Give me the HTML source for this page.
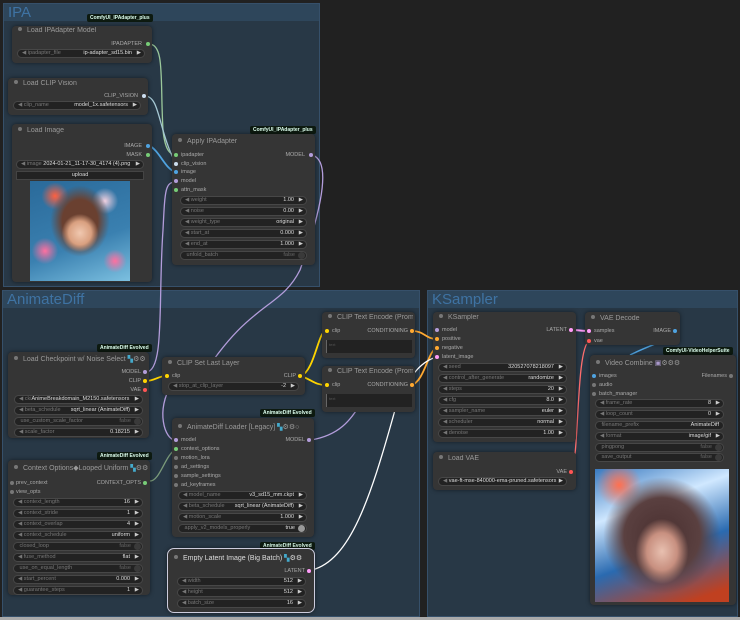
<!DOCTYPE html><html><head><meta charset="utf-8"><style>
*{margin:0;padding:0;box-sizing:border-box}
body{width:740px;height:620px;background:#212121;position:relative;overflow:hidden;font-family:"Liberation Sans",sans-serif;}
.g{position:absolute;background:#283846;border:1px solid #36506a}
.gt{position:absolute;left:0;right:0;top:0;height:17px;background:#2e465b;color:#3f73a3;font-size:15px;line-height:17px;padding-left:4px}
.n{position:absolute;background:#353535;border-radius:4px;box-shadow:0 0 4px rgba(0,0,0,.5)}
.t{position:absolute;left:6px;right:2px;overflow:hidden;font-size:7px;color:#9a9a9a;white-space:nowrap}
.t:before{content:"";display:inline-block;width:4px;height:4px;border-radius:2px;background:#777;margin-right:5px;vertical-align:1px}
.w{position:absolute;height:9px;border-radius:5px;background:#222;border:1px solid #474747;font-size:5.5px;line-height:7px;color:#777;padding:0 4px;white-space:nowrap;overflow:hidden}
.w .v{position:absolute;right:12px;color:#ddd}
.w .r{position:absolute;right:3px;color:#ccc}
.w.b .v{right:11px;color:#666}
.w.b .r{width:7px;height:7px;border-radius:4px;background:#3a3a3a;top:0;right:1px}
.s{position:absolute;font-size:5.5px;color:#aaa;white-space:nowrap;line-height:6px}
.o{position:absolute;font-size:5.5px;color:#aaa;white-space:nowrap;text-align:right;line-height:6px}
.d{position:absolute;width:4px;height:4px;border-radius:2px}
.bd{position:absolute;background:#0d1a10;color:#dfe;font-size:5px;font-weight:bold;line-height:8px;padding:0 3px;border-radius:2px;white-space:nowrap}
</style></head><body>
<div class="g" style="left:3px;top:3px;width:317px;height:284px"><div class="gt">IPA</div></div>
<div class="g" style="left:2px;top:290px;width:418px;height:327px"><div class="gt">AnimateDiff</div></div>
<div class="g" style="left:427px;top:290px;width:311px;height:327px"><div class="gt">KSampler</div></div>
<div style="position:absolute;left:0;top:617px;width:740px;height:3px;background:#aaa"></div>

<svg style="position:absolute;left:0;top:0" width="740" height="620" fill="none" stroke-width="1.3">
<path d="M149 44 C165 44,160 80,163 130 C165 150,170 155,176 155" stroke="#9bc89b"/>
<path d="M145 96 C160 96,158 130,176 164" stroke="#a6c8d4"/>
<path d="M148 145 C160 150,165 170,176 172" stroke="#4fa3e0" stroke-width="1.8"/>
<path d="M146 372 C165 372,158 300,163 230 C165 190,165 182,176 182" stroke="#b39ddb"/>
<path d="M312 155 C330 160,325 200,300 270 C280 310,250 300,200 380" stroke="#b39ddb"/>
<path d="M172 384 C155 410,165 440,175 440" stroke="#b39ddb"/>
<path d="M311 440 C340 435,350 420,360 405" stroke="#b39ddb"/>
<path d="M145 381 C155 381,158 376,166 376" stroke="#ffd500" stroke-width="1.8"/>
<path d="M301 376 C315 370,318 331,326 331" stroke="#ffd500" stroke-width="1.8"/>
<path d="M301 376 C312 380,315 385,326 385" stroke="#ffd500" stroke-width="1.8"/>
<path d="M412 331 C425 331,425 339,437 339" stroke="#ffa931" stroke-width="1.8"/>
<path d="M412 385 C425 380,428 350,437 348" stroke="#ffa931" stroke-width="1.8"/>
<path d="M312 570 C350 560,370 500,395 410 C410 370,425 360,437 357" stroke="#fff" stroke-width="1.3"/>
<path d="M150 481 C160 481,165 455,176 449" stroke="#7a9a7a"/>
<path d="M571 330 C578 330,582 331,589 331" stroke="#ff9cf9" stroke-width="2"/>
<path d="M570 471 C580 471,575 350,589 341" stroke="#ff6e6e"/>
<path d="M675 331 C670 340,650 345,630 355" stroke="#4fa3e0" stroke-width="1.5"/>
</svg>

<div class="bd" style="left:87px;top:14px">ComfyUI_IPAdapter_plus</div>
<div class="n" style="left:12px;top:26px;width:140px;height:37px">
<div class="t" style="top:1px">Load IPAdapter Model</div>
<div class="o" style="right:10px;top:15px">IPADAPTER</div><div class="d" style="right:2px;top:16px;background:#7c7"></div>
<div class="w" style="left:5px;top:23px;width:128px">◀ ipadapter_file<span class="v">ip-adapter_sd15.bin</span><span class="r">▶</span></div>
</div>
<div class="n" style="left:8px;top:78px;width:140px;height:37px">
<div class="t" style="top:2px">Load CLIP Vision</div>
<div class="o" style="right:10px;top:15px">CLIP_VISION</div><div class="d" style="right:2px;top:16px;background:#cde"></div>
<div class="w" style="left:5px;top:23px;width:128px">◀ clip_name<span class="v">model_1x.safetensors</span><span class="r">▶</span></div>
</div>
<div class="n" style="left:12px;top:124px;width:140px;height:158px">
<div class="t" style="top:3px">Load Image</div>
<div class="o" style="right:10px;top:19px">IMAGE</div><div class="d" style="right:2px;top:20px;background:#4fa3e0"></div>
<div class="o" style="right:10px;top:28px">MASK</div><div class="d" style="right:2px;top:29px;background:#7c7"></div>
<div class="w" style="left:4px;top:36px;width:128px">◀ image <span style="color:#ddd">2024-01-21_11-17-30_4174 (4).png</span><span class="r">▶</span></div>
<div style="position:absolute;left:4px;top:47px;width:128px;height:9px;background:#222;border:1px solid #444;font-size:5.5px;color:#ddd;text-align:center;line-height:7px">upload</div>
<div style="position:absolute;left:18px;top:57px;width:100px;height:100px;background:radial-gradient(ellipse at 50% 52%,#f0c8b0 0,#d9a080 16%,transparent 26%),radial-gradient(ellipse at 50% 40%,#6a4030 0,#6a4030 25%,transparent 42%),radial-gradient(circle at 25% 15%,#ff6040 0,transparent 12%),radial-gradient(circle at 75% 20%,#f0d0e0 0,transparent 12%),radial-gradient(circle at 15% 70%,#ff70a0 0,transparent 12%),radial-gradient(circle at 85% 80%,#ff70a0 0,transparent 10%),linear-gradient(160deg,#2a6a9a,#3a80b0 60%,#7cc0e0)"></div>
</div>
<div class="bd" style="left:250px;top:126px">ComfyUI_IPAdapter_plus</div>
<div class="n" style="left:172px;top:134px;width:143px;height:131px">
<div class="t" style="top:4px">Apply IPAdapter</div>
<div class="d" style="left:2px;top:19px;background:#7c7"></div><div class="s" style="left:9px;top:18px">ipadapter</div>
<div class="d" style="left:2px;top:28px;background:#cde"></div><div class="s" style="left:9px;top:27px">clip_vision</div>
<div class="d" style="left:2px;top:36px;background:#4fa3e0"></div><div class="s" style="left:9px;top:35px">image</div>
<div class="d" style="left:2px;top:45px;background:#b39ddb"></div><div class="s" style="left:9px;top:44px">model</div>
<div class="d" style="left:2px;top:54px;background:#7c7"></div><div class="s" style="left:9px;top:53px">attn_mask</div>
<div class="o" style="right:10px;top:18px">MODEL</div><div class="d" style="right:2px;top:19px;background:#b39ddb"></div>
<div class="w" style="left:8px;top:62px;width:127px">◀ weight<span class="v">1.00</span><span class="r">▶</span></div>
<div class="w" style="left:8px;top:73px;width:127px">◀ noise<span class="v">0.00</span><span class="r">▶</span></div>
<div class="w" style="left:8px;top:84px;width:127px">◀ weight_type<span class="v">original</span><span class="r">▶</span></div>
<div class="w" style="left:8px;top:95px;width:127px">◀ start_at<span class="v">0.000</span><span class="r">▶</span></div>
<div class="w" style="left:8px;top:106px;width:127px">◀ end_at<span class="v">1.000</span><span class="r">▶</span></div>
<div class="w b" style="left:8px;top:117px;width:127px">&nbsp;unfold_batch<span class="v">false</span><span class="r"></span></div>
</div>

<div class="bd" style="left:97px;top:344px">AnimateDiff Evolved</div>
<div class="n" style="left:8px;top:352px;width:141px;height:86px">
<div class="t" style="top:3px">Load Checkpoint w/ Noise Select <span style="color:#4ac">▚</span>⚙⚙</div>
<div class="o" style="right:8px;top:17px">MODEL</div><div class="d" style="right:2px;top:18px;background:#b39ddb"></div>
<div class="o" style="right:8px;top:26px">CLIP</div><div class="d" style="right:2px;top:27px;background:#ffd500"></div>
<div class="o" style="right:8px;top:35px">VAE</div><div class="d" style="right:2px;top:36px;background:#f55"></div>
<div class="w" style="left:6px;top:43px;width:129px">◀ cki<span style="color:#ddd">AnimeBreakdomain_M2150.safetensors</span><span class="r">▶</span></div>
<div class="w" style="left:6px;top:54px;width:129px">◀ beta_schedule<span class="v">sqrt_linear (AnimateDiff)</span><span class="r">▶</span></div>
<div class="w b" style="left:6px;top:65px;width:129px">&nbsp;use_custom_scale_factor<span class="v">false</span><span class="r"></span></div>
<div class="w" style="left:6px;top:76px;width:129px">◀ scale_factor<span class="v">0.18215</span><span class="r">▶</span></div>
</div>
<div class="n" style="left:162px;top:357px;width:143px;height:38px">
<div class="t" style="top:3px">CLIP Set Last Layer</div>
<div class="d" style="left:3px;top:17px;background:#ffd500"></div><div class="s" style="left:10px;top:16px">clip</div>
<div class="o" style="right:9px;top:16px">CLIP</div><div class="d" style="right:3px;top:17px;background:#ffd500"></div>
<div class="w" style="left:6px;top:25px;width:131px">◀ stop_at_clip_layer<span class="v">-2</span><span class="r">▶</span></div>
</div>
<div class="n" style="left:322px;top:312px;width:93px;height:46px">
<div class="t" style="top:2px">CLIP Text Encode (Prompt)</div>
<div class="d" style="left:3px;top:17px;background:#ffd500"></div><div class="s" style="left:10px;top:16px">clip</div>
<div class="o" style="right:7px;top:16px">CONDITIONING</div><div class="d" style="right:1px;top:17px;background:#ffa931"></div>
<div style="position:absolute;left:4px;top:28px;width:86px;height:13px;background:#222;border-left:1px solid #666;font-size:4px;color:#555;padding:2px">text</div>
</div>
<div class="n" style="left:322px;top:366px;width:93px;height:46px">
<div class="t" style="top:2px">CLIP Text Encode (Prompt)</div>
<div class="d" style="left:3px;top:17px;background:#ffd500"></div><div class="s" style="left:10px;top:16px">clip</div>
<div class="o" style="right:7px;top:16px">CONDITIONING</div><div class="d" style="right:1px;top:17px;background:#ffa931"></div>
<div style="position:absolute;left:4px;top:28px;width:86px;height:13px;background:#222;border-left:1px solid #666;font-size:4px;color:#555;padding:2px">text</div>
</div>
<div class="bd" style="left:260px;top:409px">AnimateDiff Evolved</div>
<div class="n" style="left:172px;top:418px;width:142px;height:119px">
<div class="t" style="top:5px">AnimateDiff Loader [Legacy] <span style="color:#4ac">▚</span>⚙⚙○</div>
<div class="d" style="left:2px;top:20px;background:#b39ddb"></div><div class="s" style="left:9px;top:19px">model</div>
<div class="d" style="left:2px;top:29px;background:#7c7"></div><div class="s" style="left:9px;top:28px">context_options</div>
<div class="d" style="left:2px;top:38px;background:#777"></div><div class="s" style="left:9px;top:37px">motion_lora</div>
<div class="d" style="left:2px;top:47px;background:#777"></div><div class="s" style="left:9px;top:46px">ad_settings</div>
<div class="d" style="left:2px;top:56px;background:#777"></div><div class="s" style="left:9px;top:55px">sample_settings</div>
<div class="d" style="left:2px;top:65px;background:#777"></div><div class="s" style="left:9px;top:64px">ad_keyframes</div>
<div class="o" style="right:9px;top:19px">MODEL</div><div class="d" style="right:3px;top:20px;background:#b39ddb"></div>
<div class="w" style="left:6px;top:73px;width:129px">◀ model_name<span class="v">v3_sd15_mm.ckpt</span><span class="r">▶</span></div>
<div class="w" style="left:6px;top:84px;width:129px">◀ beta_schedule<span class="v">sqrt_linear (AnimateDiff)</span><span class="r">▶</span></div>
<div class="w" style="left:6px;top:95px;width:129px">◀ motion_scale<span class="v">1.000</span><span class="r">▶</span></div>
<div class="w b" style="left:6px;top:106px;width:129px">&nbsp;apply_v2_models_properly<span class="v" style="color:#ddd">true</span><span class="r" style="background:#999"></span></div>
</div>
<div class="bd" style="left:97px;top:452px">AnimateDiff Evolved</div>
<div class="n" style="left:8px;top:460px;width:142px;height:135px">
<div class="t" style="top:4px">Context Options◆Looped Uniform <span style="color:#4ac">▚</span>⚙⚙</div>
<div class="d" style="left:2px;top:21px;background:#777"></div><div class="s" style="left:8px;top:20px">prev_context</div>
<div class="d" style="left:2px;top:30px;background:#777"></div><div class="s" style="left:8px;top:29px">view_opts</div>
<div class="o" style="right:9px;top:20px">CONTEXT_OPTS</div><div class="d" style="right:3px;top:21px;background:#7c7"></div>
<div class="w" style="left:5px;top:38px;width:130px">◀ context_length<span class="v">16</span><span class="r">▶</span></div>
<div class="w" style="left:5px;top:49px;width:130px">◀ context_stride<span class="v">1</span><span class="r">▶</span></div>
<div class="w" style="left:5px;top:60px;width:130px">◀ context_overlap<span class="v">4</span><span class="r">▶</span></div>
<div class="w" style="left:5px;top:71px;width:130px">◀ context_schedule<span class="v">uniform</span><span class="r">▶</span></div>
<div class="w b" style="left:5px;top:82px;width:130px">&nbsp;closed_loop<span class="v">false</span><span class="r"></span></div>
<div class="w" style="left:5px;top:93px;width:130px">◀ fuse_method<span class="v">flat</span><span class="r">▶</span></div>
<div class="w b" style="left:5px;top:104px;width:130px">&nbsp;use_on_equal_length<span class="v">false</span><span class="r"></span></div>
<div class="w" style="left:5px;top:115px;width:130px">◀ start_percent<span class="v">0.000</span><span class="r">▶</span></div>
<div class="w" style="left:5px;top:126px;width:130px">◀ guarantee_steps<span class="v">1</span><span class="r">▶</span></div>
</div>
<div class="bd" style="left:260px;top:542px">AnimateDiff Evolved</div>
<div class="n" style="left:167px;top:548px;width:148px;height:65px;border:1px solid #ccd;border-radius:7px">
<div class="t" style="top:5px;color:#ddd">Empty Latent Image (Big Batch) <span style="color:#4ac">▚</span>⚙⚙</div>
<div class="o" style="right:9px;top:19px">LATENT</div><div class="d" style="right:3px;top:20px;background:#ff9cf9"></div>
<div class="w" style="left:9px;top:28px;width:129px">◀ width<span class="v">512</span><span class="r">▶</span></div>
<div class="w" style="left:9px;top:39px;width:129px">◀ height<span class="v">512</span><span class="r">▶</span></div>
<div class="w" style="left:9px;top:50px;width:129px">◀ batch_size<span class="v">16</span><span class="r">▶</span></div>
</div>

<div class="n" style="left:433px;top:312px;width:143px;height:130px">
<div class="t" style="top:2px">KSampler</div>
<div class="d" style="left:2px;top:16px;background:#b39ddb"></div><div class="s" style="left:9px;top:15px">model</div>
<div class="d" style="left:2px;top:25px;background:#ffa931"></div><div class="s" style="left:9px;top:24px">positive</div>
<div class="d" style="left:2px;top:34px;background:#ffa931"></div><div class="s" style="left:9px;top:33px">negative</div>
<div class="d" style="left:2px;top:43px;background:#ff9cf9"></div><div class="s" style="left:9px;top:42px">latent_image</div>
<div class="o" style="right:9px;top:15px">LATENT</div><div class="d" style="right:3px;top:16px;background:#ff9cf9"></div>
<div class="w" style="left:5px;top:51px;width:129px">◀ seed<span class="v">320527078218097</span><span class="r">▶</span></div>
<div class="w" style="left:5px;top:62px;width:129px">◀ control_after_generate<span class="v">randomize</span><span class="r">▶</span></div>
<div class="w" style="left:5px;top:73px;width:129px">◀ steps<span class="v">20</span><span class="r">▶</span></div>
<div class="w" style="left:5px;top:84px;width:129px">◀ cfg<span class="v">8.0</span><span class="r">▶</span></div>
<div class="w" style="left:5px;top:95px;width:129px">◀ sampler_name<span class="v">euler</span><span class="r">▶</span></div>
<div class="w" style="left:5px;top:106px;width:129px">◀ scheduler<span class="v">normal</span><span class="r">▶</span></div>
<div class="w" style="left:5px;top:117px;width:129px">◀ denoise<span class="v">1.00</span><span class="r">▶</span></div>
</div>
<div class="n" style="left:433px;top:452px;width:143px;height:38px">
<div class="t" style="top:3px">Load VAE</div>
<div class="o" style="right:9px;top:17px">VAE</div><div class="d" style="right:3px;top:18px;background:#f55"></div>
<div class="w" style="left:5px;top:25px;width:129px">◀ <span style="color:#ddd">vae-ft-mse-840000-ema-pruned.safetensors</span><span class="r">▶</span></div>
</div>
<div class="n" style="left:585px;top:312px;width:95px;height:33px">
<div class="t" style="top:3px">VAE Decode</div>
<div class="d" style="left:2px;top:17px;background:#ff9cf9"></div><div class="s" style="left:9px;top:16px">samples</div>
<div class="d" style="left:2px;top:27px;background:#f55"></div><div class="s" style="left:9px;top:26px">vae</div>
<div class="o" style="right:9px;top:16px">IMAGE</div><div class="d" style="right:3px;top:17px;background:#4fa3e0"></div>
</div>
<div class="bd" style="left:663px;top:347px">ComfyUI-VideoHelperSuite</div>
<div class="n" style="left:590px;top:355px;width:146px;height:250px">
<div class="t" style="top:4px">Video Combine <span style="color:#a9c">▣</span>⚙⚙⚙</div>
<div class="d" style="left:2px;top:19px;background:#4fa3e0"></div><div class="s" style="left:9px;top:18px">images</div>
<div class="d" style="left:2px;top:28px;background:#777"></div><div class="s" style="left:9px;top:27px">audio</div>
<div class="d" style="left:2px;top:37px;background:#777"></div><div class="s" style="left:9px;top:36px">batch_manager</div>
<div class="o" style="right:9px;top:18px">Filenames</div><div class="d" style="right:3px;top:19px;background:#777"></div>
<div class="w" style="left:5px;top:44px;width:129px">◀ frame_rate<span class="v">8</span><span class="r">▶</span></div>
<div class="w" style="left:5px;top:55px;width:129px">◀ loop_count<span class="v">0</span><span class="r">▶</span></div>
<div class="w" style="left:5px;top:66px;width:129px">&nbsp;filename_prefix<span class="v" style="right:4px">AnimateDiff</span></div>
<div class="w" style="left:5px;top:77px;width:129px">◀ format<span class="v">image/gif</span><span class="r">▶</span></div>
<div class="w b" style="left:5px;top:88px;width:129px">&nbsp;pingpong<span class="v">false</span><span class="r"></span></div>
<div class="w b" style="left:5px;top:98px;width:129px">&nbsp;save_output<span class="v">false</span><span class="r"></span></div>
<div style="position:absolute;left:5px;top:114px;width:134px;height:133px;background:radial-gradient(ellipse at 50% 62%,#e8c0b0 0,#c89080 16%,transparent 28%),radial-gradient(ellipse at 50% 50%,#4a3030 0,#5a4040 40%,transparent 62%),radial-gradient(circle at 18% 12%,#ff7050 0,transparent 14%),linear-gradient(160deg,#3a7ac0,#d0e8ff 30%,#2a6ab0 60%,#c04020 92%)"></div>
</div>
</body></html>
